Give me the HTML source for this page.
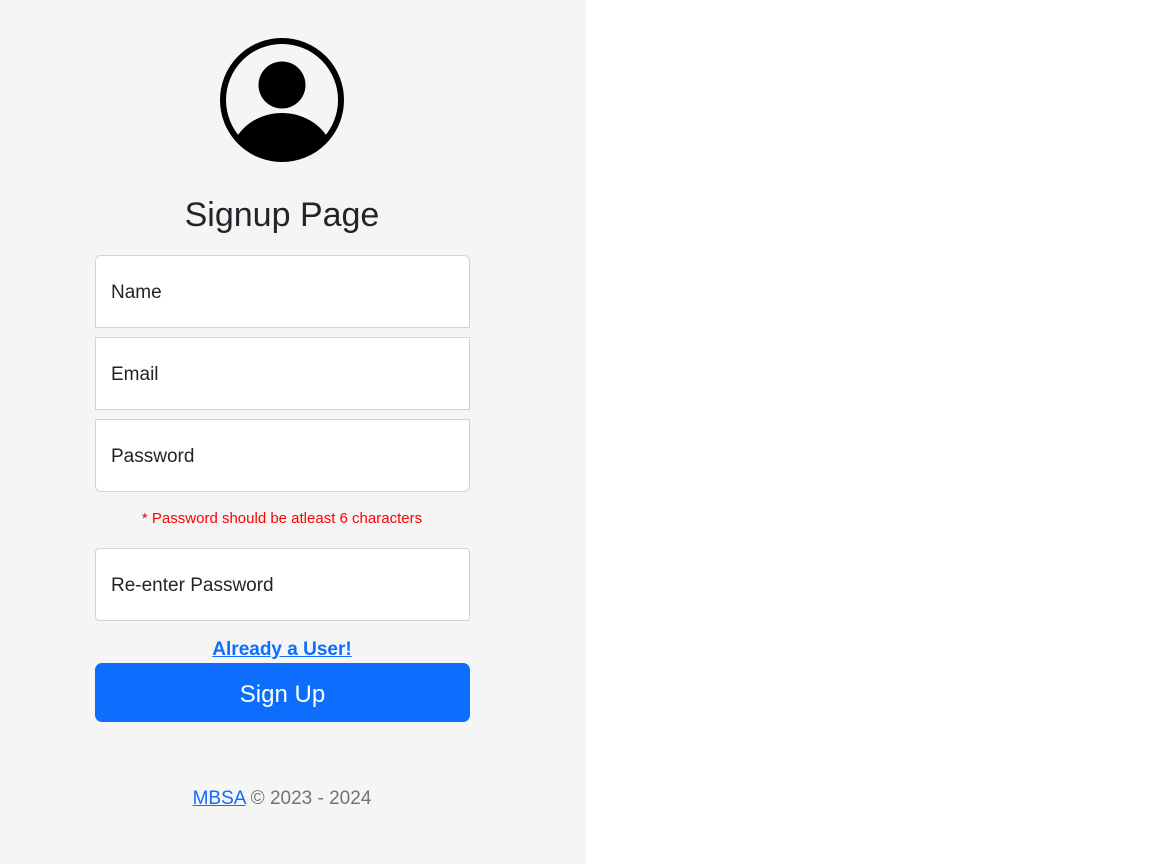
<!DOCTYPE html>
<html><head><style>
body{margin:0;width:1152px;height:864px;background:#fff;font-family:"Liberation Sans",sans-serif;}
.left{position:absolute;left:0;top:0;width:586px;height:864px;background:#f5f5f5;}
.in{position:absolute;left:95px;width:373px;height:71px;background:#fff;border:1px solid #ced4da;box-sizing:content-box;font-size:19px;color:#212529;line-height:74px;text-indent:15px;}
.c{position:absolute;left:0;width:564px;text-align:center;}
</style></head><body>
<div class="left">
<svg style="position:absolute;left:218px;top:36px" width="128" height="128" viewBox="0 0 128 128">
<defs><clipPath id="cp"><circle cx="64" cy="64" r="59"/></clipPath></defs>
<circle cx="64" cy="64" r="59" fill="none" stroke="#000" stroke-width="6"/>
<circle cx="64" cy="49" r="23.5" fill="#000"/>
<ellipse cx="64" cy="124" rx="52" ry="47" fill="#000" clip-path="url(#cp)"/>
</svg>
<div class="c" style="top:196px;font-size:34px;color:#212529;">Signup Page</div>
<div class="in" style="top:255px;border-radius:6px 6px 0 0;">Name</div>
<div class="in" style="top:337px;">Email</div>
<div class="in" style="top:419px;border-radius:0 0 6px 6px;">Password</div>
<div class="c" style="top:510px;font-size:15px;color:#ff0000;">* Password should be atleast 6 characters</div>
<div class="in" style="top:548px;border-radius:4px;">Re-enter Password</div>
<div class="c" style="top:639px;font-size:19px;font-weight:bold;color:#0d6efd;text-decoration:underline;">Already a User!</div>
<div style="position:absolute;left:95px;top:663px;width:375px;height:59px;background:#0d6efd;border-radius:7px;color:#fff;font-size:24px;line-height:63px;text-align:center;">Sign Up</div>
<div class="c" style="top:788px;font-size:19px;color:#6c757d;"><span style="color:#0d6efd;text-decoration:underline;">MBSA</span> © 2023 - 2024</div>
</div>
</body></html>
